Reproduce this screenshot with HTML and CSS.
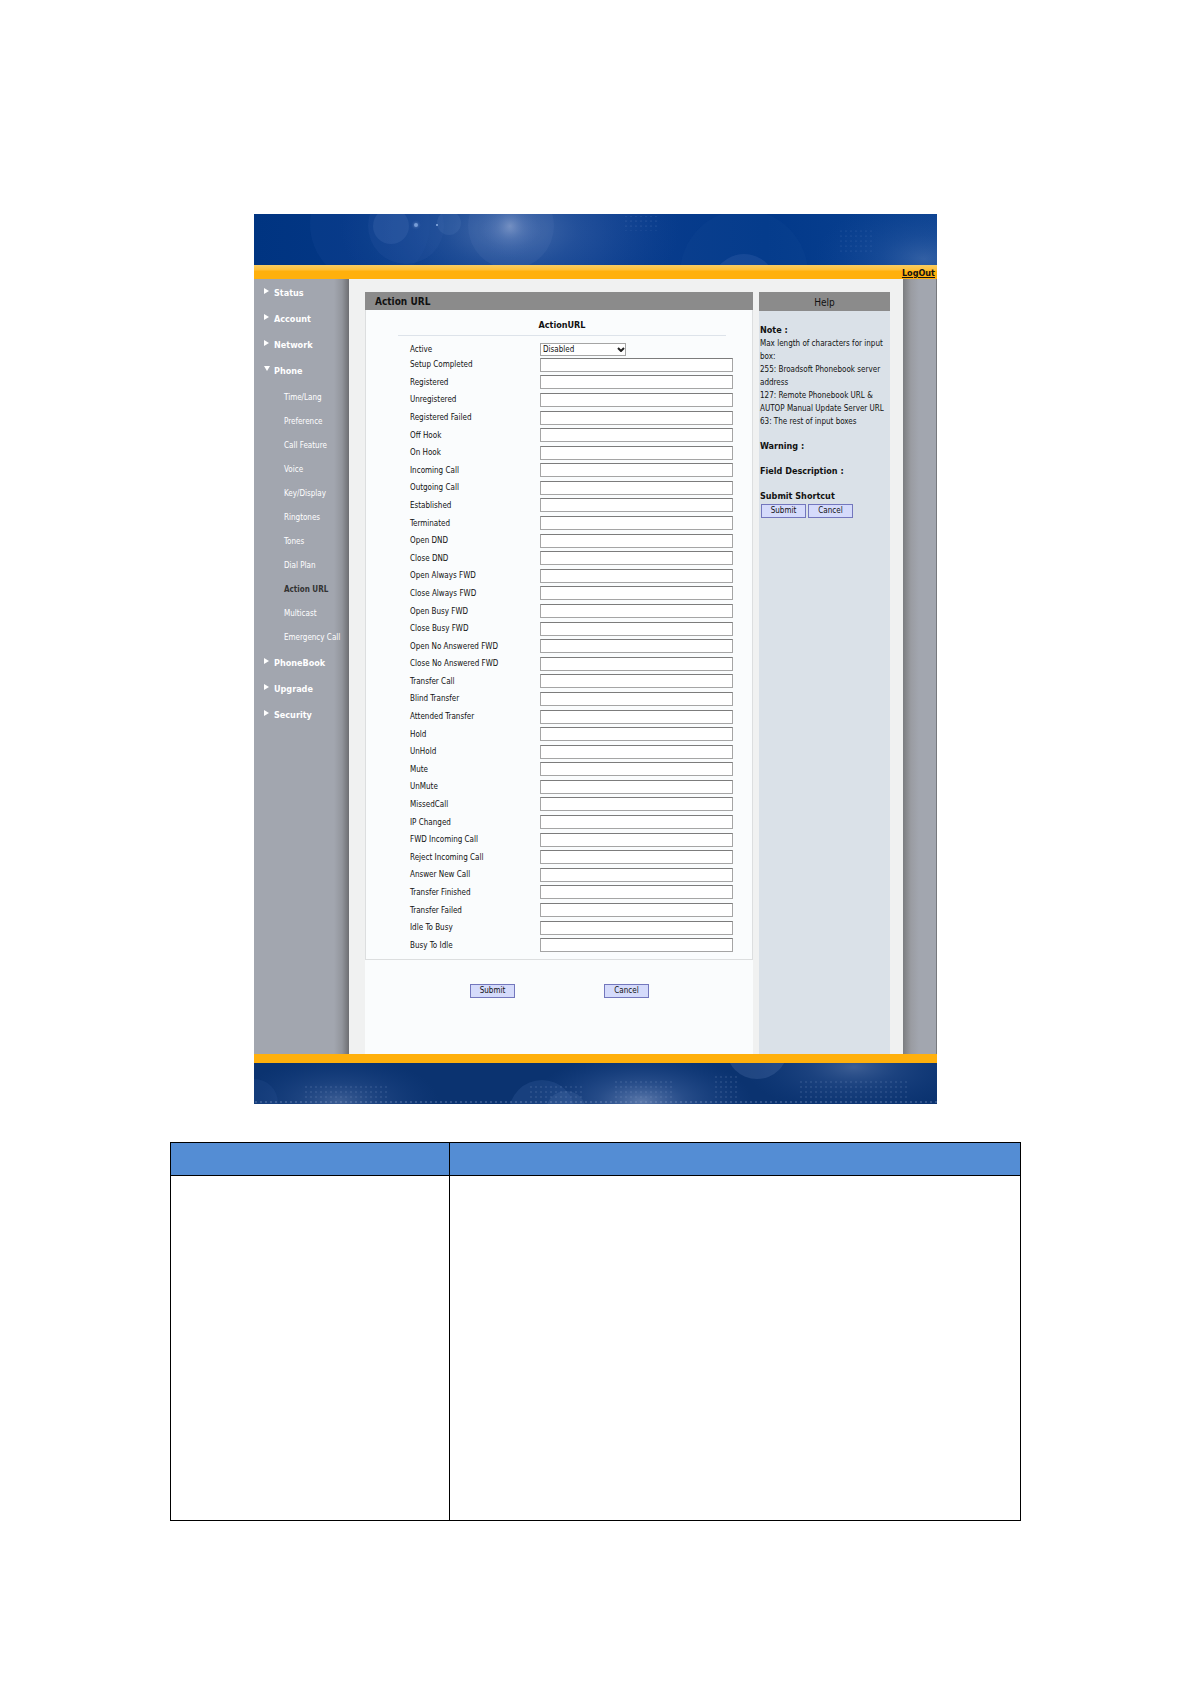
FILE: index.html
```
<!DOCTYPE html>
<html lang="en">
<head>
  <meta charset="UTF-8" />
  <meta name="viewport" content="width=device-width, initial-scale=1.0"/>
  <title>Action URL</title>
  <link rel="stylesheet" href="styles.css">
</head>
<body>

<div class="app">
  <header class="banner">
    <svg class="art" viewBox="0 0 683 51" preserveAspectRatio="xMidYMid slice" aria-hidden="true">
      <defs>
        <radialGradient id="glow">
          <stop offset="0" stop-color="#8fa5d0" stop-opacity="0.75"/>
          <stop offset="0.4" stop-color="#5f80bc" stop-opacity="0.4"/>
          <stop offset="1" stop-color="#2f5aa5" stop-opacity="0"/>
        </radialGradient>
        <pattern id="dots" width="5" height="5" patternUnits="userSpaceOnUse">
          <circle cx="2" cy="2" r="0.6" fill="#6f8fc5"/>
        </pattern>
      </defs>
      <ellipse cx="256" cy="16" rx="170" ry="90" fill="url(#glow)" opacity="0.7"/>
      <ellipse cx="670" cy="45" rx="110" ry="60" fill="url(#glow)" opacity="0.4"/>
      <circle cx="116" cy="10" r="60" fill="#2a58a6" opacity="0.15"/>
      <circle cx="152" cy="12" r="38" fill="#3a66ae" opacity="0.15"/>
      <circle cx="137" cy="12" r="18" fill="#4a74b8" opacity="0.25"/>
      <circle cx="195" cy="9" r="12" fill="#5a80be" opacity="0.2"/>
      <circle cx="257" cy="12" r="43" fill="#5f80bc" opacity="0.15"/>
      <circle cx="256" cy="12" r="34" fill="url(#glow)" opacity="0.8"/>
      <circle cx="162" cy="11" r="5" fill="url(#glow)"/>
      <circle cx="162" cy="11" r="2" fill="#7fa6e0" opacity="0.8"/>
      <circle cx="183" cy="11" r="1" fill="#8fb2e6"/>
      <circle cx="490" cy="72" r="32" fill="#4a74b8" opacity="0.25"/>
      <circle cx="490" cy="60" r="64" fill="#2a58a6" opacity="0.1"/>
      <rect x="370" y="2" width="35" height="15" fill="url(#dots)" opacity="0.5"/>
      <rect x="585" y="15" width="35" height="25" fill="url(#dots)" opacity="0.4"/>
    </svg>
  </header>
  <div class="topbar"><a href="#">LogOut</a></div>

  <div class="body">
    <nav class="menu">
      <ul>
        <li><a href="#">Status</a></li>
        <li><a href="#">Account</a></li>
        <li><a href="#">Network</a></li>
        <li class="open"><a href="#">Phone</a>
          <ul class="submenu">
            <li><a href="#">Time/Lang</a></li>
            <li><a href="#">Preference</a></li>
            <li><a href="#">Call Feature</a></li>
            <li><a href="#">Voice</a></li>
            <li><a href="#">Key/Display</a></li>
            <li><a href="#">Ringtones</a></li>
            <li><a href="#">Tones</a></li>
            <li><a href="#">Dial Plan</a></li>
            <li><a href="#" class="current">Action URL</a></li>
            <li><a href="#">Multicast</a></li>
            <li><a href="#">Emergency Call</a></li>
          </ul>
        </li>
        <li><a href="#">PhoneBook</a></li>
        <li><a href="#">Upgrade</a></li>
        <li><a href="#">Security</a></li>
      </ul>
    </nav>

    <main class="content">
      <form class="panel">
        <h1>Action URL</h1>
        <div class="box">
          <h2>ActionURL</h2>
          <div class="row active-row">
            <label for="active">Active</label>
            <div class="select">
              <select id="active"><option>Disabled</option><option>Enabled</option></select>
              <svg viewBox="0 0 8 5" aria-hidden="true"><path d="M1 1l3 3 3-3"/></svg>
            </div>
          </div>
          <div class="fields">
            <div class="row"><label for="f1">Setup Completed</label><input type="text" id="f1"></div>
            <div class="row"><label for="f2">Registered</label><input type="text" id="f2"></div>
            <div class="row"><label for="f3">Unregistered</label><input type="text" id="f3"></div>
            <div class="row"><label for="f4">Registered Failed</label><input type="text" id="f4"></div>
            <div class="row"><label for="f5">Off Hook</label><input type="text" id="f5"></div>
            <div class="row"><label for="f6">On Hook</label><input type="text" id="f6"></div>
            <div class="row"><label for="f7">Incoming Call</label><input type="text" id="f7"></div>
            <div class="row"><label for="f8">Outgoing Call</label><input type="text" id="f8"></div>
            <div class="row"><label for="f9">Established</label><input type="text" id="f9"></div>
            <div class="row"><label for="f10">Terminated</label><input type="text" id="f10"></div>
            <div class="row"><label for="f11">Open DND</label><input type="text" id="f11"></div>
            <div class="row"><label for="f12">Close DND</label><input type="text" id="f12"></div>
            <div class="row"><label for="f13">Open Always FWD</label><input type="text" id="f13"></div>
            <div class="row"><label for="f14">Close Always FWD</label><input type="text" id="f14"></div>
            <div class="row"><label for="f15">Open Busy FWD</label><input type="text" id="f15"></div>
            <div class="row"><label for="f16">Close Busy FWD</label><input type="text" id="f16"></div>
            <div class="row"><label for="f17">Open No Answered FWD</label><input type="text" id="f17"></div>
            <div class="row"><label for="f18">Close No Answered FWD</label><input type="text" id="f18"></div>
            <div class="row"><label for="f19">Transfer Call</label><input type="text" id="f19"></div>
            <div class="row"><label for="f20">Blind Transfer</label><input type="text" id="f20"></div>
            <div class="row"><label for="f21">Attended Transfer</label><input type="text" id="f21"></div>
            <div class="row"><label for="f22">Hold</label><input type="text" id="f22"></div>
            <div class="row"><label for="f23">UnHold</label><input type="text" id="f23"></div>
            <div class="row"><label for="f24">Mute</label><input type="text" id="f24"></div>
            <div class="row"><label for="f25">UnMute</label><input type="text" id="f25"></div>
            <div class="row"><label for="f26">MissedCall</label><input type="text" id="f26"></div>
            <div class="row"><label for="f27">IP Changed</label><input type="text" id="f27"></div>
            <div class="row"><label for="f28">FWD Incoming Call</label><input type="text" id="f28"></div>
            <div class="row"><label for="f29">Reject Incoming Call</label><input type="text" id="f29"></div>
            <div class="row"><label for="f30">Answer New Call</label><input type="text" id="f30"></div>
            <div class="row"><label for="f31">Transfer Finished</label><input type="text" id="f31"></div>
            <div class="row"><label for="f32">Transfer Failed</label><input type="text" id="f32"></div>
            <div class="row"><label for="f33">Idle To Busy</label><input type="text" id="f33"></div>
            <div class="row"><label for="f34">Busy To Idle</label><input type="text" id="f34"></div>
          </div>
        </div>
        <div class="actions">
          <button type="submit" class="btn">Submit</button>
          <button type="reset" class="btn">Cancel</button>
        </div>
      </form>

      <aside class="help">
        <h2>Help</h2>
        <div class="help-text">
          <h3>Note :</h3>
          <p>Max length of characters for input box:</p>
          <p>255: Broadsoft Phonebook server address</p>
          <p>127: Remote Phonebook URL &amp; AUTOP Manual Update Server URL</p>
          <p>63: The rest of input boxes</p>
          <h3>Warning :</h3>
          <h3>Field Description :</h3>
          <h3>Submit Shortcut</h3>
          <div class="shortcut">
            <button type="button" class="btn">Submit</button>
            <button type="button" class="btn">Cancel</button>
          </div>
        </div>
      </aside>
    </main>
    <div class="gutter"></div>
  </div>

  <footer class="bottom">
    <svg class="art" viewBox="0 0 683 41" preserveAspectRatio="xMidYMid slice" aria-hidden="true">
      <defs>
        <pattern id="grid" width="5" height="5" patternUnits="userSpaceOnUse">
          <circle cx="2" cy="4" r="0.7" fill="#8da3cc"/>
        </pattern>
      </defs>
      <ellipse cx="85" cy="38" rx="100" ry="44" fill="url(#glow)" opacity="0.5"/>
      <ellipse cx="388" cy="38" rx="110" ry="48" fill="url(#glow)" opacity="0.8"/>
      <ellipse cx="600" cy="4" rx="110" ry="46" fill="url(#glow)" opacity="0.5"/>
      <circle cx="288" cy="50" r="33" fill="#3f68a8" opacity="0.25"/>
      <circle cx="312" cy="48" r="20" fill="#5f80b8" opacity="0.2"/>
      <circle cx="503" cy="-15" r="31" fill="#5f80b8" opacity="0.25"/>
      <circle cx="0" cy="40" r="24" fill="#3f68a8" opacity="0.15"/>
      <rect x="0" y="35" width="683" height="6" fill="url(#grid)" opacity="0.8"/>
      <rect x="50" y="20" width="85" height="15" fill="url(#grid)" opacity="0.4"/>
      <rect x="275" y="20" width="55" height="15" fill="url(#grid)" opacity="0.4"/>
      <rect x="360" y="15" width="60" height="20" fill="url(#grid)" opacity="0.4"/>
      <rect x="460" y="10" width="25" height="25" fill="url(#grid)" opacity="0.4"/>
      <rect x="545" y="15" width="110" height="20" fill="url(#grid)" opacity="0.4"/>
    </svg>
  </footer>
</div>

<table class="desc">
  <thead>
    <tr><th></th><th></th></tr>
  </thead>
  <tbody>
    <tr><td></td><td></td></tr>
  </tbody>
</table>

</body>
</html>
```
FILE: styles.css
```
:root {
  --orange: #ffb00c;
  --grey-bar: #8b8b8b;
  --side: #a2a6af;
}

* {
  margin: 0;
  padding: 0;
  box-sizing: border-box;
}

body {
  padding: 214px 24px 120px;
  background: #fff;
  color: #111;
  font-family: "DejaVu Sans Condensed", "Noto Sans", sans-serif;
  font-size: 8px;
}

ul {
  list-style: none;
}

a {
  color: inherit;
  text-decoration: none;
}

.app {
  max-width: 683px;
  margin: 0 auto;
}

.banner {
  height: 51px;
  background: linear-gradient(90deg, #003481, #0b3d8d 50%, #02398a 75%, #0b4291);
}

.art {
  display: block;
  width: 100%;
  height: 100%;
}

.topbar {
  height: 14px;
  padding-right: 2px;
  background: linear-gradient(#f8cc62, #ffc038 5px, var(--orange) 6px);
  text-align: right;
  font-size: 9px;
  font-weight: bold;
  line-height: 16px;
}

.topbar a {
  text-decoration: underline;
}

.body {
  display: flex;
  min-height: 775px;
  background: #f0f1f1;
}

/* left menu */
.menu {
  flex: 0 0 95px;
  padding-top: 1px;
  background: linear-gradient(90deg, var(--side) 80px, #92959c 88px, #6d6e72);
  color: #fff;
  font-size: 9px;
  font-weight: bold;
}

.menu a {
  display: flex;
  align-items: center;
  height: 26px;
  padding-left: 10px;
}

.menu a::before {
  content: "";
  width: 0;
  margin: -5px 5px 0 0;
  border: solid transparent;
  border-width: 3px 0 3px 5px;
  border-left-color: #fff;
}

.menu .open > a::before {
  border-width: 5px 3px 0;
  border-color: #fff transparent transparent;
  margin-right: 4px;
}

.submenu {
  padding: 1px 0;
  font-size: 8px;
  font-weight: normal;
}

.submenu a {
  height: 24px;
  padding-left: 30px;
  white-space: nowrap;
}

.menu .submenu a::before {
  content: none;
}

.submenu .current {
  color: #333;
  font-weight: bold;
}

/* middle */
.content {
  flex: 1;
  display: flex;
  gap: 6px;
  padding: 13px 13px 0 16px;
}

.panel {
  flex: 1;
  background: #fafcfd;
}

.panel h1 {
  height: 18px;
  padding-left: 10px;
  background: var(--grey-bar);
  font-size: 10px;
  line-height: 20px;
}

.box {
  border: 1px solid #dcdedf;
  border-top: 0;
  padding: 5px 19px 5px 44px;
}

.box h2 {
  margin: 0 7px 6px -12px;
  border-bottom: 1px solid #dde3ea;
  font-size: 9px;
  line-height: 20px;
  text-align: center;
}

.row {
  display: grid;
  grid-template-columns: 130px 1fr;
  align-items: center;
}

.active-row {
  height: 14px;
}

.fields {
  display: grid;
  grid-auto-rows: 1fr;
  min-height: 598px;
}

.row input {
  width: 100%;
  height: 14px;
  border: 1px solid #a5a5a5;
  border-top-color: #7c7c7c;
  background: #fff;
  font: inherit;
}

.select {
  position: relative;
  width: 86px;
}

.select select {
  display: block;
  width: 100%;
  height: 13px;
  padding-left: 2px;
  appearance: none;
  border: 1px solid #a5a5a5;
  border-radius: 0;
  background: #fff;
  color: #111;
  font: inherit;
}

.select svg {
  position: absolute;
  top: 4px;
  right: 1px;
  width: 8px;
  height: 5px;
  fill: none;
  stroke: #222;
  stroke-width: 2;
  pointer-events: none;
}

.actions {
  display: flex;
  gap: 89px;
  padding: 24px 0 24px 105px;
}

.btn {
  width: 45px;
  height: 14px;
  border: 1px solid #7377bd;
  background: #d5dbfb;
  color: #111;
  font: inherit;
  line-height: 12px;
}

/* help column */
.help {
  flex: 0 0 131px;
  background: #dae1e8;
}

.help h2 {
  height: 19px;
  background: var(--grey-bar);
  font-size: 10px;
  font-weight: normal;
  line-height: 22px;
  text-align: center;
}

.help-text {
  padding: 13px 1px 0;
  line-height: 13px;
}

.help h3 {
  font-size: 9px;
}

.help p + h3,
.help h3 + h3 {
  margin-top: 12px;
}

.shortcut {
  display: flex;
  gap: 2px;
  padding: 1px;
}

.gutter {
  flex: 0 0 34px;
  border-right: 1px solid #77797e;
  background: linear-gradient(90deg, #7b7d80, #9a9ca2 8px, var(--side) 16px);
}

.bottom {
  height: 50px;
  border-top: 9px solid var(--orange);
  background: #0b3370;
}

/* description table below the page */
.desc {
  width: 100%;
  max-width: 851px;
  margin: 38px auto 0;
  border-collapse: collapse;
  table-layout: fixed;
}

.desc th,
.desc td {
  border: 1px solid #000;
}

.desc th {
  height: 33px;
  background: #548dd4;
}

.desc th:first-child {
  width: 279px;
}

.desc td {
  height: 345px;
}
```
